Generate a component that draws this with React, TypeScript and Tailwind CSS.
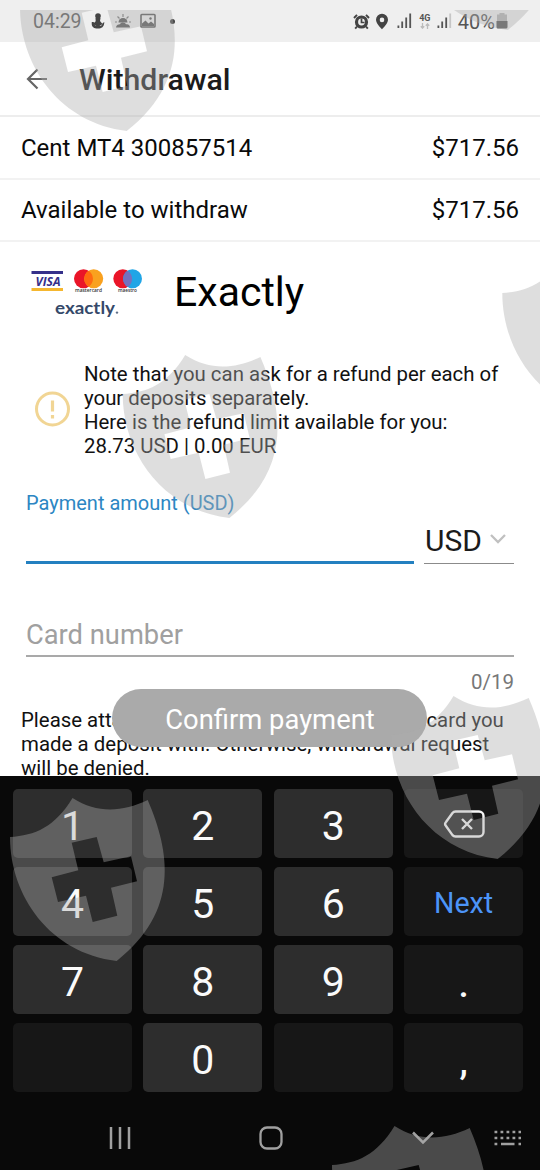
import type { ReactNode } from "react";

type KeyProps = {
  children?: ReactNode;
  dim?: boolean;
};

const SHIELDS = [
  { x: 20, y: -32 },
  { x: 401, y: -133 },
  { x: 502.3, y: 254 },
  { x: 122.7, y: 355 },
  { x: 391, y: 696 },
  { x: 10, y: 798 },
  { x: 332, y: 1126 },
];

const SHIELD_PATH =
  "M0 39C25 37.500 45 29 62.500 0C88 16 112 14 137.700 2C160 54 170 113 106.700 163C40 155 0 98 0 39Z" +
  "M61.700 44.700L86.700 39L93.700 64.300L121 58.300L127 83.300L101 89.700L107.300 117.700L82.700 124L76 97.700L48 104L41.700 79.300L68.300 72.300Z";

function Watermark() {
  return (
    <svg
      viewBox="0 0 540 1170"
      className="pointer-events-none absolute inset-0 h-[1170px] w-[540px]"
      aria-hidden="true"
    >
      <defs>
        <clipPath id="visible-area">
          <rect x="0" y="10" width="540" height="1160" />
        </clipPath>
      </defs>
      <g clipPath="url(#visible-area)" fill="#acacac" fillOpacity="0.4" fillRule="evenodd">
        {SHIELDS.map(({ x, y }) => (
          <path key={`${x}-${y}`} d={SHIELD_PATH} transform={`translate(${x} ${y})`} />
        ))}
      </g>
    </svg>
  );
}

function Signal({ faded = false }: { faded?: boolean }) {
  return (
    <svg width="15" height="16" viewBox="0 0 15 16" fill="#555" aria-hidden="true">
      <rect x="0.500" y="12.500" width="1.800" height="2.500" />
      <rect x="4.300" y="8.500" width="1.800" height="6.500" />
      <rect x="8.300" y="4.500" width="1.800" height="10.500" />
      <rect x="12.300" y="0.500" width="1.800" height="14.500" fill={faded ? "#c6c6c6" : "#555"} />
    </svg>
  );
}

function StatusBar() {
  return (
    <div className="flex h-[42px] items-center bg-[#efefef] pr-[32px] pl-[33px] text-[#555]">
      <span className="w-[58px] pt-[2px] text-[19.5px]">04:29</span>
      <svg width="14" height="16" viewBox="0 0 14 16" fill="#444" aria-hidden="true">
        <circle cx="7" cy="3" r="2.800" />
        <path d="M4.500 5h5l-.5 3 2.500 3-4.500 3L2 11l2.700-2.800z" />
        <path d="M.8 9C0 15 4 15.600 7 15.500c3.500 0 6.200-1.500 6.300-6.500l-1.800 1.200c-.3 2.100-1.500 2.800-3.500 2.800-3.500 0-5-.5-5.200-4z" />
      </svg>
      <svg className="ml-[10px]" width="16" height="16" viewBox="0 0 16 16" fill="#555" aria-hidden="true">
        <path d="M3.500 9.500a4.500 4.500 0 0 1 9 0z" />
        <path d="M1 14.500c0-2 1.700-3.500 3.300-3C6.500 8.500 10 9 11 11.300c2.500-.5 4 1 4 3.200z" />
        <path d="M8 1v3M2.500 3.500l2 2M13.500 3.500l-2 2M0 9h2M14 9h2" stroke="#777" strokeWidth="1.200" />
      </svg>
      <svg className="ml-[9px]" width="16" height="16" viewBox="0 0 16 16" fill="none" aria-hidden="true">
        <rect x="1" y="1.500" width="14" height="12.500" rx="0.800" stroke="#555" strokeWidth="1.600" />
        <path d="M2 13v-2.500l3.500-3 3 3 2.500-2L14 11v2z" fill="#555" />
        <circle cx="10.500" cy="5.500" r="1.200" fill="#555" />
      </svg>
      <span className="ml-[14px] h-[5px] w-[5px] rounded-full bg-[#444]" />

      <div className="ml-auto flex items-center">
        <svg width="17" height="17" viewBox="0 0 17 17" fill="none" stroke="#444" aria-hidden="true">
          <circle cx="8.500" cy="9" r="5" strokeWidth="3.200" />
          <path d="M1 5L4 1.800M16 5l-3-3.200M4 13.500l-1.800 2.200M13 13.500l1.800 2.200" strokeWidth="1.900" />
          <path d="M8.500 5.500V9.500H11.500" strokeWidth="1.700" />
        </svg>
        <svg className="ml-[5px]" width="14" height="17" viewBox="0 0 14 17" aria-hidden="true">
          <path d="M7 .8a6 6 0 0 0-6 6c0 4 6 9.500 6 9.500s6-5.500 6-9.500a6 6 0 0 0-6-6zM7 4.600a2.300 2.300 0 1 1 0 4.600 2.300 2.300 0 0 1 0-4.600z" fill="#444" fillRule="evenodd" />
        </svg>
        <span className="ml-[8px]"><Signal /></span>
        <div className="ml-[6px] flex w-[14px] flex-col items-center text-[9px] leading-[9px] font-bold">
          4G
          <svg width="10" height="6" viewBox="0 0 10 6" fill="none" stroke="#bbb" strokeWidth="1.300" aria-hidden="true">
            <path d="M2.500 0v5M.8 3.200l1.700 1.900 1.700-1.900M7.500 6V1M5.800 2.800L7.500.9l1.700 1.900" />
          </svg>
        </div>
        <span className="ml-[5px]"><Signal faded /></span>
        <span className="ml-[6px] pt-[2px] text-[20px]">40%</span>
        <svg className="ml-[1px]" width="12" height="16" viewBox="0 0 12 16" aria-hidden="true">
          <path d="M3.500 0h5v1.500h2.500V8H1V1.500h2.500z" fill="#b4b4b4" />
          <path d="M0.500 8h11v6a1.500 1.500 0 0 1-1.500 1.500H2A1.500 1.500 0 0 1 .5 14z" fill="#555" />
        </svg>
      </div>
    </div>
  );
}

function BalanceRow({ label, value }: { label: string; value: string }) {
  return (
    <div className="flex h-[62.5px] items-center justify-between border-b-2 border-[#f2f2f2] px-[21px] pt-[1px] text-[24px] text-[#0a0a0a]">
      <span>{label}</span>
      <span>{value}</span>
    </div>
  );
}

function PaymentLogos() {
  return (
    <svg className="mt-[2px]" width="116" height="52" viewBox="0 0 116 52" aria-hidden="true">
      <rect x="3.500" y="3" width="31.500" height="3" fill="#35308a" />
      <rect x="3.500" y="20" width="31.500" height="3" fill="#f5b72f" />
      <text x="7.500" y="17.600" fontFamily="Open Sans, sans-serif" fontSize="12.500" fontWeight="700" fontStyle="italic" fill="#35308a" textLength="25" lengthAdjust="spacingAndGlyphs">VISA</text>
      <circle cx="55.500" cy="10.800" r="9.500" fill="#ea1528" />
      <circle cx="65.700" cy="10.800" r="9.500" fill="#f9a11f" />
      <path d="M60.600 2.800a9.500 9.500 0 0 1 0 16 9.500 9.500 0 0 1 0-16z" fill="#ff6a10" />
      <text x="47" y="24" fontFamily="Open Sans, sans-serif" fontSize="5" fontWeight="600" fill="#333" textLength="27" lengthAdjust="spacingAndGlyphs">mastercard</text>
      <circle cx="94.800" cy="10.800" r="9.500" fill="#ea1528" />
      <circle cx="104.500" cy="10.800" r="9.500" fill="#20a5e6" />
      <path d="M99.600 2.700a9.500 9.500 0 0 1 0 16.200 9.500 9.500 0 0 1 0-16.200z" fill="#7570be" />
      <text x="90" y="24" fontFamily="Open Sans, sans-serif" fontSize="5" fontWeight="600" fill="#333" textLength="19" lengthAdjust="spacingAndGlyphs">maestro</text>
      <text x="27" y="45.500" fontFamily="Lato, sans-serif" fontSize="16.500" fontWeight="700" fill="#35496a" textLength="60" lengthAdjust="spacingAndGlyphs">exactly</text>
      <circle cx="89" cy="44.600" r="1.200" fill="#5f6f88" />
    </svg>
  );
}

function Key({ children, dim = false }: KeyProps) {
  return (
    <button
      type="button"
      className={`flex h-[69px] items-center justify-center rounded-[5px] pt-[5px] text-[41px] leading-none text-[#fafafa] ${
        dim ? "bg-[#171717]" : "bg-[#2d2d2d]"
      }`}
    >
      {children}
    </button>
  );
}

function Keyboard() {
  return (
    <div className="h-[394px] bg-[#090909] pt-[13px]">
      <div className="grid grid-cols-4 gap-x-[11.5px] gap-y-[9px] pr-[17px] pl-[13px]">
        <Key>1</Key>
        <Key>2</Key>
        <Key>3</Key>
        <Key dim>
          <svg className="mb-[5px]" width="42" height="28" viewBox="0 0 42 28" fill="none" stroke="#f5f5f5" strokeWidth="2.400" strokeLinejoin="round" aria-hidden="true">
            <path d="M12.500 1.500H36a4.500 4.500 0 0 1 4.500 4.500v16a4.500 4.500 0 0 1-4.500 4.500H12.500a4 4 0 0 1-3-1.400L3 16a3 3 0 0 1 0-4l6.500-9a4 4 0 0 1 3-1.500z" />
            <path d="M19 9l10 10M29 9l-10 10" />
          </svg>
        </Key>
        <Key>4</Key>
        <Key>5</Key>
        <Key>6</Key>
        <Key dim>
          <span className="mb-[1px] text-[28.6px] text-[#4c94f8]">Next</span>
        </Key>
        <Key>7</Key>
        <Key>8</Key>
        <Key>9</Key>
        <Key dim><span className="pt-[5px] text-[37px] font-medium">.</span></Key>
        <Key dim />
        <Key>0</Key>
        <Key dim />
        <Key dim><span className="pt-[3px] text-[37px] font-medium">,</span></Key>
      </div>
      <div className="flex h-[91px] items-center pl-[109px] text-[#a0a0a0]">
        <svg width="22" height="24" viewBox="0 0 22 24" stroke="currentColor" strokeWidth="2.500" aria-hidden="true">
          <path d="M2 1v22M11 1v22M20 1v22" />
        </svg>
        <svg className="ml-[128px]" width="24" height="24" viewBox="0 0 24 24" fill="none" stroke="currentColor" strokeWidth="2.300" aria-hidden="true">
          <rect x="1.500" y="1.500" width="21" height="21" rx="6.500" />
        </svg>
        <svg className="ml-[128px]" width="24" height="14" viewBox="0 0 24 14" fill="none" stroke="currentColor" strokeWidth="2.500" aria-hidden="true">
          <path d="M2 1.500l10 10 10-10" />
        </svg>
        <svg className="ml-[59px]" width="27" height="16" viewBox="0 0 27 16" stroke="currentColor" strokeWidth="2.600" aria-hidden="true">
          <path d="M.5 2h27M.5 8h27" strokeDasharray="2.800 3.200" />
          <path d="M.5 14h2.800M7 14h13.500M24.500 14h2.800" />
        </svg>
      </div>
    </div>
  );
}

export default function App() {
  return (
    <main className="relative h-[1170px] w-[540px] overflow-hidden bg-white font-['Roboto',sans-serif]">
      <StatusBar />

      <header className="flex h-[75px] items-center border-b-2 border-[#ededed] pl-[26px]">
        <svg width="22" height="22" viewBox="0 0 22 22" fill="none" stroke="#666" strokeWidth="2.200" aria-hidden="true">
          <path d="M21 11H2M11.500 1.500L2 11l9.500 9.500" />
        </svg>
        <h1 className="ml-[31px] pt-[2px] text-[30.3px] font-medium text-[#1b1b1b]">Withdrawal</h1>
      </header>

      <BalanceRow label="Cent MT4 300857514" value="$717.56" />
      <BalanceRow label="Available to withdraw" value="$717.56" />

      <section className="flex h-[102px] items-center pl-[28px]">
        <PaymentLogos />
        <h2 className="ml-[30px] text-[41px] text-black">Exactly</h2>
      </section>

      <section className="mt-[18px] flex h-[96px] items-center pl-[34px] text-[20.4px] leading-[24px] text-[#111]">
        <svg className="mb-[2px]" width="36" height="36" viewBox="0 0 36 36" fill="none" stroke="#f1d594" aria-hidden="true">
          <circle cx="18.500" cy="18" r="16" strokeWidth="3" />
          <path d="M18.500 9.500v11M18.500 24v3.500" strokeWidth="3.200" />
        </svg>
        <p className="ml-[14px] whitespace-nowrap">
          Note that you can ask for a refund per each of
          <br />
          your deposits separately.
          <br />
          Here is the refund limit available for you:
          <br />
          28.73 USD | 0.00 EUR
        </p>
      </section>

      <section className="px-[26px] pt-[33px]">
        <label className="block text-[20px] leading-[24px] text-[#2c86c3]">Payment amount (USD)</label>
        <div className="flex h-[49px] gap-[10px]">
          <div className="w-[388px] border-b-[3px] border-[#2380c0]" />
          <div className="flex flex-1 items-center border-b border-[#8b8b8b] pt-[3px] pl-[1px] text-[30px] text-[#1b1b1b]">
            USD
            <svg className="mb-[3px] ml-[7px]" width="18" height="12" viewBox="0 0 18 12" fill="none" stroke="#c0c0c0" strokeWidth="2.300" aria-hidden="true">
              <path d="M2 2l7 7 7-7" />
            </svg>
          </div>
        </div>
        <div className="mt-[50px] flex h-[43px] items-center border-b-2 border-[#a9a9a9] pt-[2px] text-[27.3px] text-[#a0a0a0]">
          Card number
        </div>
        <p className="mt-[13px] text-right text-[20.5px] leading-[24px] text-[#777]">0/19</p>
      </section>

      <section className="relative h-[82px]">
        <p className="h-[82px] overflow-hidden pt-[14px] pl-[21px] text-[20.4px] leading-[24px] whitespace-nowrap text-[#111]">
          Please attach a screenshot or a photo of the card you
          <br />
          <span className="tracking-[0.04px]">made a deposit with. Otherwise, withdrawal request</span>
          <br />
          will be denied.
        </p>
        <button
          type="button"
          className="absolute top-[-5px] left-[112px] h-[58px] w-[315px] rounded-full bg-[#aaa] pt-[6px] pl-[1px] text-[27.4px] text-white"
        >
          Confirm payment
        </button>
      </section>

      <Keyboard />
      <Watermark />
    </main>
  );
}
